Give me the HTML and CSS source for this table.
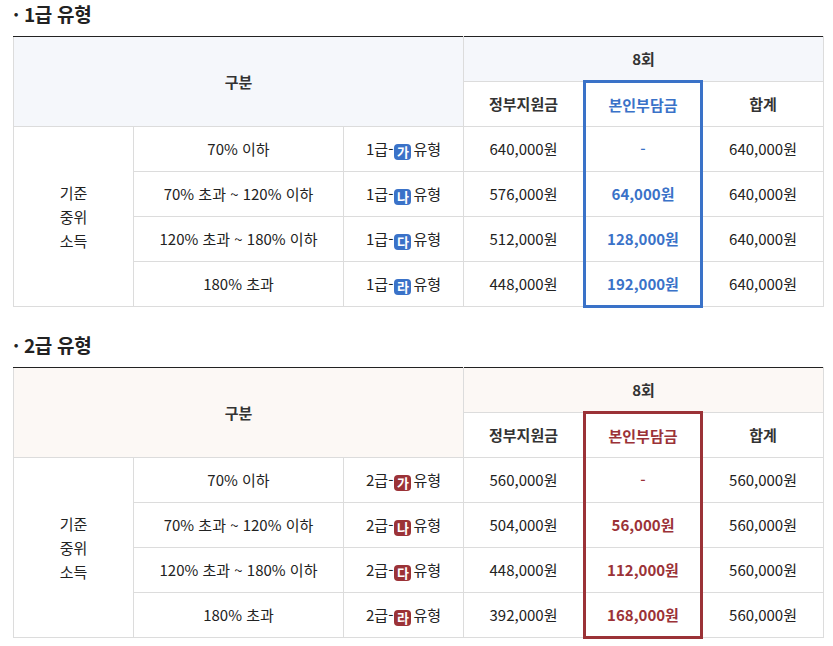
FILE: index.html
```html
<!DOCTYPE html>
<html lang="ko">
<head>
<meta charset="utf-8">
<title>급 유형별 본인부담금</title>
<link rel="stylesheet" href="styles.css">
</head>
<body>
<div class="page">
  <section class="block theme-blue">
    <h2 class="title">· 1급 유형</h2>
    <table class="fee">
      <colgroup>
        <col class="c1"><col class="c2"><col class="c3"><col class="c4"><col class="c5"><col class="c6">
      </colgroup>
      <thead>
        <tr class="hr1"><th colspan="3" rowspan="2" class="shade">구분</th><th colspan="3" class="shade">8회</th></tr>
        <tr class="hr2"><th>정부지원금</th><th class="hl">본인부담금</th><th>합계</th></tr>
      </thead>
      <tbody>
        <tr><td rowspan="4" class="grp">기준<br>중위<br>소득</td><td>70% 이하</td><td>1급-<span class="badge">가</span>유형</td><td>640,000원</td><td class="hl dash">-</td><td>640,000원</td></tr>
        <tr><td>70% 초과 ~ 120% 이하</td><td>1급-<span class="badge">나</span>유형</td><td>576,000원</td><td class="hl amt">64,000원</td><td>640,000원</td></tr>
        <tr><td>120% 초과 ~ 180% 이하</td><td>1급-<span class="badge">다</span>유형</td><td>512,000원</td><td class="hl amt">128,000원</td><td>640,000원</td></tr>
        <tr class="last"><td>180% 초과</td><td>1급-<span class="badge">라</span>유형</td><td>448,000원</td><td class="hl amt">192,000원</td><td>640,000원</td></tr>
      </tbody>
    </table>
  </section>

  <section class="block theme-red">
    <h2 class="title">· 2급 유형</h2>
    <table class="fee">
      <colgroup>
        <col class="c1"><col class="c2"><col class="c3"><col class="c4"><col class="c5"><col class="c6">
      </colgroup>
      <thead>
        <tr class="hr1"><th colspan="3" rowspan="2" class="shade">구분</th><th colspan="3" class="shade">8회</th></tr>
        <tr class="hr2"><th>정부지원금</th><th class="hl">본인부담금</th><th>합계</th></tr>
      </thead>
      <tbody>
        <tr><td rowspan="4" class="grp">기준<br>중위<br>소득</td><td>70% 이하</td><td>2급-<span class="badge">가</span>유형</td><td>560,000원</td><td class="hl dash">-</td><td>560,000원</td></tr>
        <tr><td>70% 초과 ~ 120% 이하</td><td>2급-<span class="badge">나</span>유형</td><td>504,000원</td><td class="hl amt">56,000원</td><td>560,000원</td></tr>
        <tr><td>120% 초과 ~ 180% 이하</td><td>2급-<span class="badge">다</span>유형</td><td>448,000원</td><td class="hl amt">112,000원</td><td>560,000원</td></tr>
        <tr class="last"><td>180% 초과</td><td>2급-<span class="badge">라</span>유형</td><td>392,000원</td><td class="hl amt">168,000원</td><td>560,000원</td></tr>
      </tbody>
    </table>
  </section>
</div>
</body>
</html>
```

FILE: styles.css
```css
* { box-sizing: border-box; }

html, body {
  margin: 0;
  padding: 0;
  background: #ffffff;
}

body {
  font-family: "Noto Sans CJK KR", "Noto Sans", sans-serif;
  color: #222222;
}

.page {
  padding: 0 10px 0 13px;
}

.block + .block {
  margin-top: 23px;
}

.theme-blue { --accent: #3a72c8; --shade: #f5f7fb; }
.theme-red { --accent: #9b3237; --shade: #fcf8f5; }

.title {
  margin: 0 0 8px 0;
  font-size: 19px;
  line-height: 28px;
  font-weight: 700;
  color: #222222;
  letter-spacing: -0.3px;
}

.fee {
  width: 810px;
  table-layout: fixed;
  border-collapse: collapse;
  border-top: 1px solid #222222;
  font-size: 15px;
}

.c1 { width: 120px; }
.c2 { width: 210px; }
.c3 { width: 120px; }
.c4 { width: 121px; }
.c5 { width: 117px; }
.c6 { width: 122px; }

.fee th,
.fee td {
  border: 1px solid #dcdcdc;
  padding: 0;
  text-align: center;
  vertical-align: middle;
  line-height: 24px;
  font-weight: 400;
}

.fee thead tr:first-child th {
  border-top: 1px solid #222222;
}

.fee th {
  font-weight: 700;
  color: #333333;
}

.fee .shade {
  background: var(--shade);
}

.hr1 { height: 45px; }
.hr2 { height: 45px; }
.fee tbody tr { height: 45px; }

.fee .hl {
  border-left: 3px solid var(--accent);
  border-right: 3px solid var(--accent);
  color: var(--accent);
}

.fee th.hl {
  border-top: 3px solid var(--accent);
}

.fee .last .hl {
  border-bottom: 3px solid var(--accent);
}

.fee .amt {
  font-weight: 700;
}

.fee .dash {
  font-weight: 500;
}

.badge {
  display: inline-block;
  width: 17px;
  height: 16px;
  margin: 0 2px 0 1px;
  border-radius: 4px;
  background: var(--accent);
  color: #ffffff;
  font-size: 13px;
  font-weight: 700;
  line-height: 16px;
  text-align: center;
  vertical-align: -2px;
  letter-spacing: 0;
}
```
